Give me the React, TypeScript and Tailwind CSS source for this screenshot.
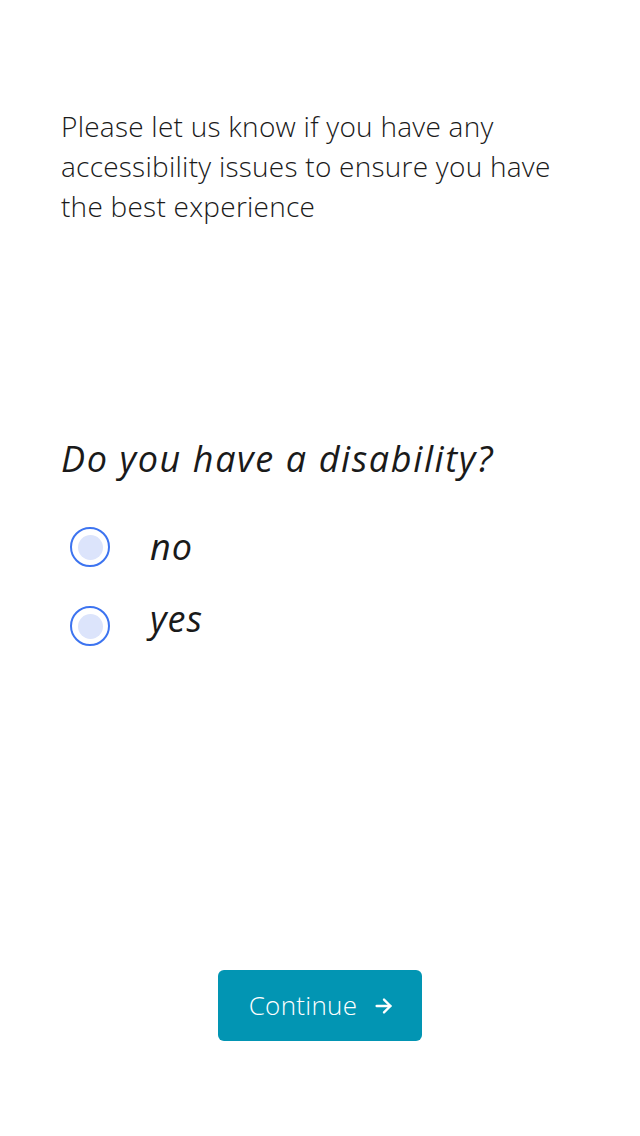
import React, { useState } from 'react';

const options = ['no', 'yes'];

const App: React.FC = () => {
  const [choice, setChoice] = useState<string | null>(null);

  return (
    <div
      className="w-[640px] h-[1136px] bg-white flex flex-col px-[61px] text-[#1a1a1a]"
      style={{ fontFamily: '"Open Sans", "Noto Sans", sans-serif' }}
    >
      <p className="mt-[106px] text-[28px] leading-[40px] font-light tracking-[0.25px] w-[510px]">
        Please let us know if you have any accessibility issues to ensure you have the best experience
      </p>

      <h2 className="mt-[209px] text-[36px] leading-[48px] italic font-normal tracking-[1.6px]">
        Do you have a disability?
      </h2>

      <div className="mt-[44px] flex flex-col gap-[39px]">
        {options.map((opt, i) => (
          <label key={opt} className="flex items-center gap-[40px] cursor-pointer ml-[9px]">
            <span className="w-[40px] h-[40px] rounded-full border-2 border-[#3d74f0] flex items-center justify-center">
              <span
                className={`w-[25px] h-[25px] rounded-full ${choice === opt ? 'bg-[#3d74f0]' : 'bg-[#dce4fb]'}`}
              />
            </span>
            <input
              type="radio"
              name="disability"
              className="hidden"
              checked={choice === opt}
              onChange={() => setChoice(opt)}
            />
            <span className={`text-[36px] leading-[40px] italic tracking-[1px] relative ${i === 1 ? '-top-[7px]' : ''}`}>
              {opt}
            </span>
          </label>
        ))}
      </div>

      <div className="flex-1" />

      <div className="flex justify-center mb-[95px]">
        <button className="w-[204px] h-[71px] rounded-[6px] bg-[#0295b3] text-white flex items-center justify-center gap-[16px] text-[26px] font-light tracking-[0.3px] pl-[4px]">
          Continue
          <svg width="22" height="22" viewBox="0 0 24 24" fill="none" stroke="currentColor" strokeWidth="2.6" strokeLinecap="round" strokeLinejoin="round">
            <path d="M4 12h15" />
            <path d="M12 5l7 7-7 7" />
          </svg>
        </button>
      </div>
    </div>
  );
};

export default App;
